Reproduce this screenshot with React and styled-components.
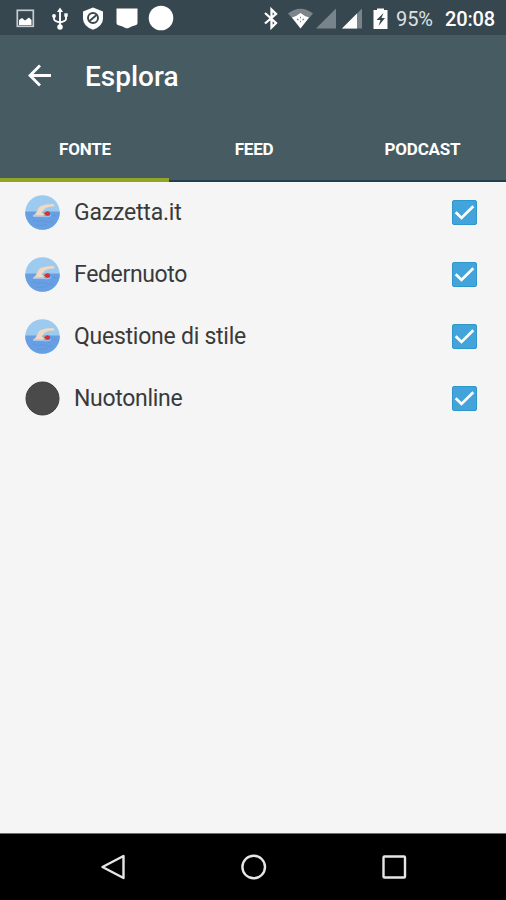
import React from "react";
import styled, { createGlobalStyle } from "styled-components";

const GlobalStyle = createGlobalStyle`
  * { box-sizing: border-box; }
  body { margin: 0; background: #f5f5f5; font-family: Roboto, "Liberation Sans", sans-serif; }
`;

const Screen = styled.div`
  width: 506px;
  height: 900px;
  display: flex;
  flex-direction: column;
  background: #f5f5f5;
  overflow: hidden;
`;

const StatusBar = styled.div`
  height: 35px;
  flex: none;
  display: flex;
  align-items: center;
  justify-content: space-between;
  padding: 1px 12px 0 12px;
  background: #37474f;
  color: #fff;
`;

const Notifications = styled.div`
  display: flex;
  gap: 8px;
`;

const SystemIcons = styled.div`
  display: flex;
  align-items: center;
`;

const Glyph = styled.svg`
  display: block;
  flex: none;
  width: ${(p) => p.$w || 26}px;
  height: 26px;
  margin-right: ${(p) => p.$gap || 0}px;
`;

const StatusText = styled.span`
  width: ${(p) => p.$w}px;
  padding-top: 1px;
  margin-right: ${(p) => p.$gap || 0}px;
  font-size: 20px;
  line-height: 26px;
  font-weight: ${(p) => p.$weight};
  letter-spacing: ${(p) => p.$track}px;
  color: ${(p) => p.$color};
  white-space: nowrap;
`;

const AppBar = styled.header`
  height: 83px;
  flex: none;
  display: flex;
  align-items: center;
  padding: 0 0 1px 26px;
  gap: 33px;
  background: #475b63;
`;

const BackButton = styled.button`
  display: block;
  width: 26px;
  height: 26px;
  padding: 0;
  border: 0;
  background: none;
`;

const Title = styled.h1`
  margin: 0;
  padding-top: 2px;
  font-size: 28px;
  line-height: 32px;
  font-weight: 500;
  letter-spacing: 0;
  color: #fff;
`;

const Tabs = styled.nav`
  height: 64px;
  flex: none;
  display: grid;
  grid-template-columns: 169px 169px 168px;
  background: #475b63;
`;

const Tab = styled.button`
  border: 0;
  border-bottom: ${(p) => (p.$active ? "4px solid #93a525" : "2px solid #1f3e4e")};
  padding: ${(p) => (p.$active ? 2 : 0)}px 0 0 1px;
  background: none;
  font-family: inherit;
  font-size: 17px;
  font-weight: 700;
  letter-spacing: -0.2px;
  color: #fff;
`;

const List = styled.main`
  flex: 1;
  display: flex;
  flex-direction: column;
`;

const Row = styled.label`
  height: 61.8px;
  display: flex;
  align-items: center;
  padding: 0 29px 0 25px;
`;

const Avatar = styled.svg`
  display: block;
  width: 35px;
  height: 35px;
  flex: none;
`;

const Name = styled.span`
  flex: 1;
  margin-left: 14px;
  padding-top: 1px;
  font-size: 23px;
  line-height: 30px;
  letter-spacing: ${(p) => p.$track}px;
  color: #3a3a3a;
`;

const Check = styled.svg`
  display: block;
  width: 25px;
  height: 25px;
  flex: none;
`;

const NavBar = styled.footer`
  height: 67px;
  flex: none;
  display: flex;
  justify-content: center;
  align-items: center;
  gap: 112px;
  padding-left: 1px;
  border-top: 1px solid #6d6d6d;
  background: #000;
`;

const NavIcon = styled.svg`
  display: block;
  width: 28px;
  height: 28px;
  fill: none;
  stroke: #e6e6e6;
  stroke-width: 2.4;
  stroke-linejoin: round;
`;

function SwimmerAvatar() {
  return (
    <Avatar viewBox="0 0 35 35">
      <defs>
        <clipPath id="disc"><circle cx="17.5" cy="17.5" r="17.3" /></clipPath>
      </defs>
      <g clipPath="url(#disc)">
        <path fill="#9dcbf0" d="M0 0h35v35H0z" />
        <path fill="#689fe3" d="M0 16.500h35V35H0z" />
        <path d="M8 25l5 1.500 5-1 5 2 5-1M11 30l5 .5 6-1M27 20.500l5 .5" fill="none" stroke="#5f97de" strokeWidth="1" />
        <path d="M8 21.500h9l5 .3q3 0 4-1.500" fill="none" stroke="#a9c6ea" strokeWidth="1" />
        <path fill="#efd9c2" d="M7.500 20.800q3.500-1.300 4.800-5 1.200-4 4-5Q22 8.600 28 9q2.200.6 1 2.500-6-.2-9.500 2.200l-2.500 3.800 2 1.500v1.800z" />
        <ellipse cx="20" cy="18.500" rx="2" ry="2" fill="#dcb7a1" />
        <ellipse cx="22.500" cy="18.500" rx="2.600" ry="2.200" fill="#d3303c" />
        <circle cx="20" cy="18.300" r=".9" fill="#6b5260" />
      </g>
    </Avatar>
  );
}

function DarkAvatar() {
  return (
    <Avatar viewBox="0 0 35 35">
      <circle cx="17.500" cy="17.500" r="16.500" fill="#4a4a4a" stroke="#3b3b3b" />
    </Avatar>
  );
}

function Checkbox() {
  return (
    <Check viewBox="0 0 25 25">
      <rect x=".5" y=".5" width="24" height="24" rx="1.500" fill="#42a4da" stroke="#2d97cb" />
      <path d="M3.700 12.200l5.800 5.700L21.300 6.200" fill="none" stroke="#fff" strokeWidth="2.700" />
    </Check>
  );
}

const sources = [
  { name: "Gazzetta.it", track: -0.2, icon: SwimmerAvatar },
  { name: "Federnuoto", track: -0.35, icon: SwimmerAvatar },
  { name: "Questione di stile", track: -0.25, icon: SwimmerAvatar },
  { name: "Nuotonline", track: -0.3, icon: DarkAvatar },
];

export default function App() {
  return (
    <>
      <GlobalStyle />
      <Screen>
        <StatusBar>
          <Notifications>
            <Glyph viewBox="0 0 26 26">
              <rect x="5.300" y="5.300" width="16" height="16" fill="none" stroke="#c5cbce" strokeWidth="1.700" />
              <path fill="#fff" d="M7 20v-5l3-2 3 2.500 4-3 2.500 2.500V20z" />
            </Glyph>
            <Glyph viewBox="-1.500 0 26 26" fill="#fff" stroke="#fff" strokeWidth="1.900">
              <path d="M12.500 6v16M6.500 11v3q0 2 6 3.500 6-1.500 6-3.500v-4" fill="none" />
              <path d="M12.500 2.500l3 4.500h-6z" stroke="none" />
              <circle cx="12.500" cy="22" r="1.800" />
              <circle cx="6.500" cy="11" r="1" />
              <path d="M16.800 8.300h3.400v3.400h-3.400z" stroke="none" />
            </Glyph>
            <Glyph viewBox="0 0 26 26">
              <path fill="#fff" d="M13 2.500l10 4v7q0 7.500-10 11.300Q3 21 3 13.500v-7z" />
              <circle cx="13" cy="13" r="5" fill="none" stroke="#37474f" strokeWidth="1.900" />
              <path d="M9.500 16l7-6" stroke="#37474f" strokeWidth="1.900" />
            </Glyph>
            <Glyph viewBox="0 0 26 26">
              <path fill="#fff" d="M2.500 3.500h21V18q0 1.800-2 2.300Q18 21 15 22.700q-2 1-4 0Q8 21 4.500 20.300q-2-.5-2-2.300z" />
            </Glyph>
            <Glyph viewBox="0 0 26 26"><circle cx="13" cy="13" r="12.300" fill="#fff" /></Glyph>
          </Notifications>
          <SystemIcons>
            <Glyph $w={16} $gap={8} viewBox="1 0 16 26">
              <path d="M2 8l11 10-4.500 4.500V4.500L13 9 2 18.500" fill="none" stroke="#fff" strokeWidth="2.300" />
            </Glyph>
            <Glyph $w={25} $gap={3} viewBox="0 0 25 26">
              <path fill="#7b868b" d="M0 8.500Q12.500-1 25 8.500L12.500 23z" />
              <path fill="#fff" d="M4 12.500L8 11l4.500-3L17 11l4 1.500-8.500 11z" />
              <path d="M9 14l1.500 1M14.500 15l1.500-1M12 16.500h1M12 12.500h1" stroke="#7b868b" strokeWidth="1.400" />
            </Glyph>
            <Glyph $w={20} $gap={6} viewBox="0 0 20 26"><path fill="#77848a" d="M0 23.500h20v-20z" /></Glyph>
            <Glyph $w={20} $gap={11} viewBox="0 0 20 26">
              <path fill="#77848a" d="M0 23.500h20v-20z" />
              <path fill="#fff" d="M0 23.500h15v-15z" />
            </Glyph>
            <Glyph $w={15} $gap={8} viewBox="0 0 15 26">
              <path fill="#fff" d="M.5 5H4V3.500h7V5h3.500v19H.5z" />
              <path fill="#37474f" d="M10.500 8L3.500 15h4l-2 6 6.500-8H8.500z" />
            </Glyph>
            <StatusText $w={37} $gap={12} $weight={400} $track={-0.1} $color="#dde1e3">95%</StatusText>
            <StatusText $w={49} $weight={500} $track={-0.15} $color="#fff">20:08</StatusText>
          </SystemIcons>
        </StatusBar>
        <AppBar>
          <BackButton aria-label="Indietro">
            <svg width="26" height="26" viewBox="0 0 26 26" fill="none" stroke="#fff" strokeWidth="2.800">
              <path d="M25 12.500H4.500M14 2.500l-10 10 10 10" />
            </svg>
          </BackButton>
          <Title>Esplora</Title>
        </AppBar>
        <Tabs>
          <Tab $active>FONTE</Tab>
          <Tab>FEED</Tab>
          <Tab>PODCAST</Tab>
        </Tabs>
        <List>
          {sources.map(({ name, track, icon: Icon }) => (
            <Row key={name}>
              <Icon />
              <Name $track={track}>{name}</Name>
              <Checkbox />
            </Row>
          ))}
        </List>
        <NavBar>
          <NavIcon viewBox="0 0 28 28"><path d="M23.500 3v22L2.500 14z" /></NavIcon>
          <NavIcon viewBox="0 0 28 28"><circle cx="13.700" cy="14" r="11.300" /></NavIcon>
          <NavIcon viewBox="0 0 28 28"><rect x="3.500" y="3.500" width="21.500" height="21" rx="1" /></NavIcon>
        </NavBar>
      </Screen>
    </>
  );
}
